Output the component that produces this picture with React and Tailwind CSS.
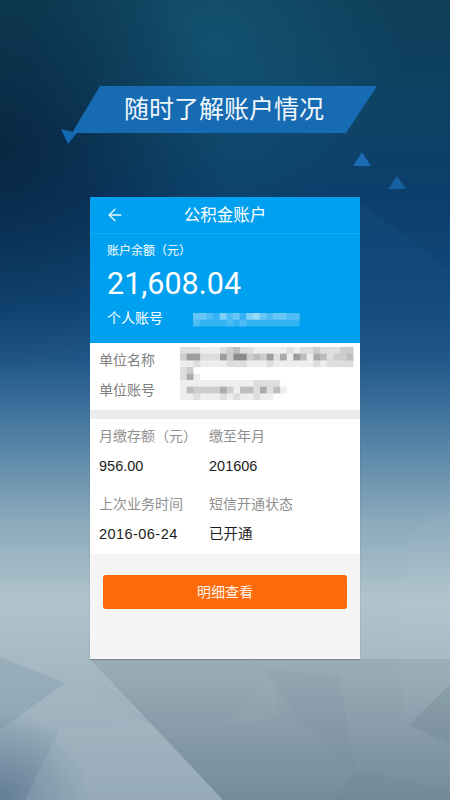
import { ArrowLeft } from "lucide-react";

const FONT = "font-['Liberation_Sans','Noto_Sans_CJK_SC',sans-serif]";

function Mosaic({ rows, width, height, color, className = "" }) {
  const cell = 20 / 3;
  return (
    <svg width={width} height={height} className={`block blur-[0.7px] ${className}`}>
      {rows.map((row, y) =>
        row.split("").map((v, x) => (
          <rect
            key={`${x}-${y}`}
            x={x * cell}
            y={y * cell}
            width={cell + 0.1}
            height={cell + 0.1}
            fill={color}
            opacity={Number(v) / 10}
          />
        ))
      )}
    </svg>
  );
}

const nameRows = [
  "22211123422111112122322233",
  "36622263773436251641542334",
  "11211112221112111111212222",
  "230",
  "251",
  "120",
];
const numRows = [
  "111111111112222",
  "1433335314425241",
  "11211121211211",
];
const accountRows = [
  "4432534256434433",
  "3222232322222222",
];

function Background() {
  return (
    <svg width="450" height="800" viewBox="0 0 450 800" className="absolute inset-0">
      <defs>
        <linearGradient id="base" x1="0" y1="0" x2="0" y2="1">
          <stop offset="0" stopColor="#0f3f58" />
          <stop offset="0.12" stopColor="#0e4263" />
          <stop offset="0.25" stopColor="#0c3f6c" />
          <stop offset="0.38" stopColor="#124a7c" />
          <stop offset="0.45" stopColor="#215888" />
          <stop offset="0.5" stopColor="#386c98" />
          <stop offset="0.56" stopColor="#5886a8" />
          <stop offset="0.65" stopColor="#8aa9bb" />
          <stop offset="0.75" stopColor="#b0c4cc" />
          <stop offset="0.82" stopColor="#a6bbc5" />
          <stop offset="1" stopColor="#8ea5b2" />
        </linearGradient>
        <radialGradient id="glow" gradientUnits="userSpaceOnUse" cx="215" cy="40" r="190">
          <stop offset="0" stopColor="#15607f" stopOpacity="0.55" />
          <stop offset="1" stopColor="#15607f" stopOpacity="0" />
        </radialGradient>
        <radialGradient id="leftShade" gradientUnits="userSpaceOnUse" cx="0" cy="150" r="230">
          <stop offset="0" stopColor="#06162a" stopOpacity="0.6" />
          <stop offset="1" stopColor="#06162a" stopOpacity="0" />
        </radialGradient>
        <radialGradient id="corner" gradientUnits="userSpaceOnUse" cx="0" cy="800" r="90">
          <stop offset="0" stopColor="#55708f" stopOpacity="0.75" />
          <stop offset="1" stopColor="#55708f" stopOpacity="0" />
        </radialGradient>
        <linearGradient id="dark" x1="0" y1="0" x2="0" y2="1">
          <stop offset="0" stopColor="#54646c" stopOpacity="0.14" />
          <stop offset="1" stopColor="#3e5566" stopOpacity="0.32" />
        </linearGradient>
        <linearGradient id="wedge" x1="0" y1="0" x2="0" y2="1">
          <stop offset="0" stopColor="#2a6aa0" stopOpacity="0.12" />
          <stop offset="1" stopColor="#2a6aa0" stopOpacity="0" />
        </linearGradient>
      </defs>
      <rect width="450" height="800" fill="url(#base)" />
      <rect width="450" height="800" fill="url(#glow)" />
      <rect width="240" height="400" fill="url(#leftShade)" />
      <polygon points="360,203 450,270 450,400 360,400" fill="url(#wedge)" />
      <polygon points="353,166 362,152 371,166" fill="#1b6cb4" />
      <polygon points="388,189 397,176 406,189" fill="#15609f" />
      <polygon points="61,129 77,133 68,144" fill="#1668b2" />

      <rect y="640" width="450" height="160" fill="url(#corner)" />
      <polygon points="0,657 65,683 0,730" fill="#5d7a8c" opacity="0.16" />
      <polygon points="65,683 152,724 60,729 0,730" fill="#ffffff" opacity="0.03" />
      <polygon points="60,729 152,724 223,800 25,800" fill="#c4d4da" opacity="0.14" />
      <polygon points="90,659 450,659 450,800 223,800" fill="url(#dark)" />
      <polygon points="225,725 270,675 280,718" fill="#ffffff" opacity="0.03" />
      <polygon points="265,670 340,676 355,770 300,720" fill="#4a606c" opacity="0.05" />
      <polygon points="408,725 450,685 450,745" fill="#4a606c" opacity="0.12" />
      <polygon points="450,505 408,535 395,640 408,725 450,685" fill="#d0dde2" opacity="0.05" />
      <polygon points="355,770 450,790 450,800 335,800" fill="#4a606c" opacity="0.05" />
    </svg>
  );
}

function Stat({ label, value, valueClass = "" }) {
  return (
    <div>
      <div className="text-[14px] leading-[20px] text-[#8f8f8f]">{label}</div>
      <div className={`mt-[10px] text-[14.5px] leading-[20px] text-[#1c1c1c] ${valueClass}`}>{value}</div>
    </div>
  );
}

export default function App() {
  return (
    <div className={`relative h-[800px] w-[450px] overflow-hidden ${FONT}`}>
      <Background />
      <div className="relative pt-[86px]">
        <div className="ml-[72px] flex h-[47px] w-[305px] items-center justify-center bg-[#176bb3] pr-[1px] [clip-path:polygon(28px_0,100%_0,274px_100%,0_100%)]">
          <span className="text-[25px] leading-none text-[#f0f7fc]">随时了解账户情况</span>
        </div>

        <div className="mt-[64px] ml-[90px] w-[270px] bg-[#f5f5f5] shadow-[0_1px_1px_rgba(60,60,60,0.35)]">
          <div className="bg-[#00a0f0] text-white">
            <div className="grid h-[37px] grid-cols-[1fr_auto_1fr] items-center border-b border-white/10 pr-[15px] pl-[15px]">
              <ArrowLeft size={20} strokeWidth={1.6} className="text-[#e6f5fe]" />
              <span className="text-[16.5px] leading-none">公积金账户</span>
              <span />
            </div>
            <div className="h-[109px] pt-[7px] pl-[17px]">
              <div className="text-[12px] leading-[20px]">账户余额（元）</div>
              <div className="mt-[5px] font-['Roboto'] text-[30.5px] leading-[36px] font-normal">21,608.04</div>
              <div className="mt-[6px] flex items-center">
                <span className="w-[86px] text-[14px] leading-[20px]">个人账号</span>
                <Mosaic rows={accountRows} width={107} height={14} color="#ffffff" className="mt-[4px]" />
              </div>
            </div>
          </div>

          <div className="border-b-[9px] border-[#ebebeb] bg-white">
            <div className="grid grid-cols-[81px_1fr] pt-[4px] pb-[10px] pl-[9px] text-[14px] leading-[20px] text-[#808080]">
              <div className="h-[33px] pt-[3px]">单位名称</div>
              <Mosaic rows={nameRows} width={175} height={33} color="#5a5a5a" />
              <div>单位账号</div>
              <Mosaic rows={numRows} width={108} height={20} color="#5a5a5a" />
            </div>
          </div>

          <div className="grid grid-cols-[110px_1fr] gap-y-[18px] bg-white pt-[7px] pb-[10px] pl-[9px]">
            <Stat label="月缴存额（元）" value="956.00" />
            <Stat label="缴至年月" value="201606" />
            <Stat label="上次业务时间" value="2016-06-24" valueClass="tracking-[0.45px]" />
            <Stat label="短信开通状态" value="已开通" />
          </div>

          <div className="px-[13px] pt-[21px] pb-[50px]">
            <div className="flex h-[34px] items-center justify-center rounded-[3px] bg-[#ff6a0a] text-[14px] text-[#fff4ec]">
              明细查看
            </div>
          </div>
        </div>
      </div>
    </div>
  );
}
